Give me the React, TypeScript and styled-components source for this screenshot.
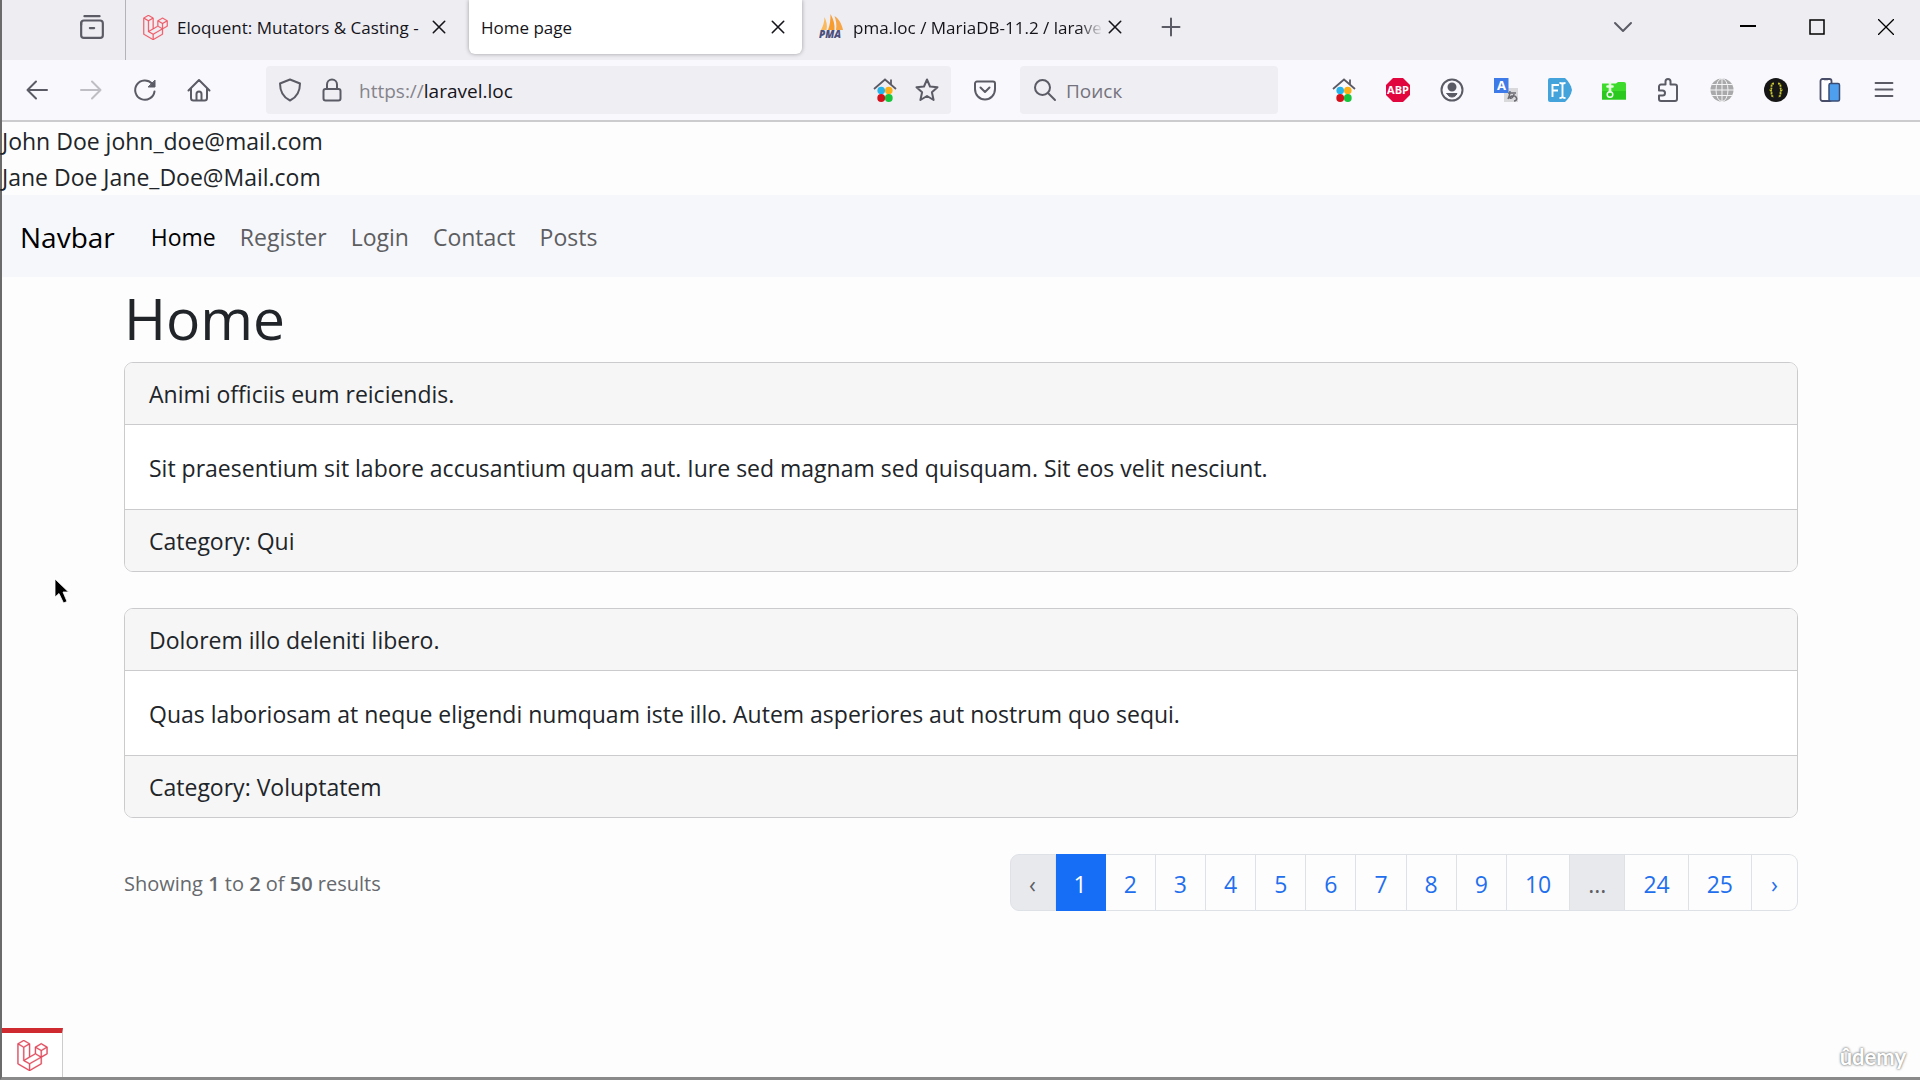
import React from "react";
import styled, { createGlobalStyle } from "styled-components";
import { SiLaravel } from "react-icons/si";

const GlobalStyle = createGlobalStyle`
  *, *::before, *::after { box-sizing: border-box; }
  body {
    margin: 0;
    background: #fdfdfd;
    color: #212529;
    font-family: "Open Sans", "Noto Sans", sans-serif;
    font-size: 23px;
    line-height: 36px;
  }
  button, input { font: inherit; color: inherit; }
  h1, p { margin: 0; }
  a { text-decoration: none; }
`;

const Window = styled.div`
  position: relative;
  display: flex;
  flex-direction: column;
  min-height: 100vh;
  border-left: 2px solid #6b6b6b;
  border-bottom: 3px solid #8a8a8a;
`;

/* ---------- browser chrome ---------- */

const TabStrip = styled.header`
  display: flex;
  align-items: center;
  height: 60px;
  padding-bottom: 6px;
  background: #eeedf2;
  color: #15141a;
  font-size: 17px;
  line-height: 24px;
`;

const RecentArea = styled.div`
  display: flex;
  align-items: center;
  align-self: flex-start;
  flex: none;
  justify-content: flex-end;
  width: 124px;
  height: 60px;
  padding: 0 13px 6px 0;
  border-right: 1px solid #b4b3b8;
`;

const Tab = styled.div<{ $active?: boolean }>`
  display: flex;
  align-items: center;
  width: ${(p) => (p.$active ? 333 : 337)}px;
  height: 54px;
  margin-left: ${(p) => (p.$active ? 6 : 0)}px;
  padding: 0 12px 0 ${(p) => (p.$active ? 12 : 17)}px;
  border-radius: 0 0 6px 6px;
  background: ${(p) => (p.$active ? "#ffffff" : "transparent")};
  box-shadow: ${(p) => (p.$active ? "0 0 4px rgba(0, 0, 0, 0.35)" : "none")};
`;

const Favicon = styled.span`
  display: flex;
  flex: none;
  width: 25px;
  margin-right: 9px;
  color: #f0505c;
`;

const TabTitle = styled.span<{ $fade?: boolean }>`
  flex: 1;
  min-width: 0;
  white-space: nowrap;
  padding-top: 2px;
  ${(p) => p.$fade && "mask-image: linear-gradient(to left, transparent 0, #000 24px);"}
`;

const IconButton = styled.button<{ $width?: number; $tone?: string }>`
  display: flex;
  flex: none;
  align-items: center;
  justify-content: center;
  width: ${(p) => p.$width ?? 54}px;
  height: 48px;
  padding: 0;
  border: 0;
  background: none;
  color: ${(p) => p.$tone ?? "#5b5b66"};
`;

const StripControls = styled.div`
  display: flex;
  gap: 63px;
  margin-left: auto;
`;

const WindowButtons = styled.div`
  display: flex;
`;

const Toolbar = styled.div`
  display: flex;
  align-items: center;
  height: 62px;
  padding: 0 9px 0 8px;
  background: #f9f8fc;
  border-bottom: 2px solid #cccccf;
  font-size: 19px;
`;

const Field = styled.div<{ $width?: number }>`
  display: flex;
  align-items: center;
  flex: ${(p) => (p.$width ? "none" : "1")};
  width: ${(p) => (p.$width ? p.$width + "px" : "auto")};
  height: 48px;
  border-radius: 4px;
  background: #efeef3;
`;

const UrlField = styled(Field)`
  margin: 0 7px 0 40px;
  padding-left: 3px;
`;

const SearchField = styled(Field)`
  margin: 0 39px 0 8px;
  padding-left: 4px;
`;

const Scheme = styled.label`
  padding-top: 2px;
  margin-left: 6px;
  color: #85848c;
`;

const TextInput = styled.input`
  flex: 1;
  min-width: 0;
  padding: 2px 0 0;
  border: 0;
  outline: 0;
  background: none;
  color: #15141a;
  &::placeholder { color: #74737d; opacity: 1; }
`;

/* ---------- web page ---------- */

const Dump = styled.div`
  padding-top: 1px;
`;

const Nav = styled.nav`
  display: flex;
  align-items: center;
  height: 82px;
  padding: 2px 18px 0;
  background: #f6f7fb;
`;

const Brand = styled.a`
  margin-right: 24px;
  color: #000000;
  font-size: 28px;
`;

const NavLink = styled.a<{ $active?: boolean }>`
  padding: 12px;
  color: ${(p) => (p.$active ? "#000000" : "#5d5e61")};
`;

const Container = styled.main`
  width: 100%;
  max-width: 1710px;
  margin: 0 auto;
  padding: 0 18px;
`;

const Title = styled.h1`
  padding: 5px 0 8px;
  font-size: 57px;
  font-weight: 400;
  line-height: 72px;
`;

const Card = styled.article`
  margin-bottom: 36px;
  overflow: hidden;
  border: 1px solid #cbcbcd;
  border-radius: 9px;
  background: #ffffff;
`;

const CardBar = styled.div<{ $foot?: boolean }>`
  padding: 13px 24px 12px;
  background: #f6f6f6;
  border: 0 solid #cbcbcd;
  border-width: ${(p) => (p.$foot ? "1px 0 0" : "0 0 1px")};
`;

const CardBody = styled.p`
  padding: 25px 24px 23px;
`;

const PagerRow = styled.div`
  display: flex;
  align-items: center;
  justify-content: space-between;
`;

const Results = styled.p`
  padding-top: 2px;
  color: #66696d;
  font-size: 20px;
  b { font-weight: 600; }
`;

const Pager = styled.ul`
  display: flex;
  margin: 0;
  padding: 0;
  list-style: none;
`;

const PageLink = styled.a<{ $kind?: "active" | "disabled" }>`
  display: block;
  min-width: 46px;
  padding: 11px 18px 8px;
  border: 1px solid #dee2e6;
  border-left-width: 0;
  color: #1f6fee;
  text-align: center;
  li:first-child > & { border-left-width: 1px; border-radius: 9px 0 0 9px; }
  li:last-child > & { border-radius: 0 9px 9px 0; }
  ${(p) => p.$kind === "active" && "background: #176ef6; border-color: #176ef6; color: #fff;"}
  ${(p) => p.$kind === "disabled" && "background: #e8e9ed; color: #5c5f64;"}
`;

const DebugBar = styled.button`
  display: flex;
  align-items: center;
  justify-content: center;
  width: 61px;
  height: 49px;
  margin-top: auto;
  padding: 0;
  border: 0 solid #cccccc;
  border-top: 5px solid #cf2a30;
  border-right-width: 1px;
  background: #ffffff;
  color: #e0485a;
`;

const Watermark = styled.div`
  position: absolute;
  right: 14px;
  bottom: 5px;
  color: #ffffff;
  font-family: Lato, sans-serif;
  font-size: 22px;
  font-weight: 700;
  line-height: 30px;
  text-shadow: 0 0 2px #777777, 0 0 3px #999999;
`;

const Pointer = styled.svg`
  position: absolute;
  left: 52px;
  top: 578px;
`;

/* ---------- icons ---------- */

const Line = ({ size = 24, w = 2, children }: { size?: number; w?: number; children: React.ReactNode }) => (
  <svg width={size} height={size} viewBox="0 0 24 24" fill="none" stroke="currentColor" strokeWidth={w} strokeLinecap="round" strokeLinejoin="round" aria-hidden="true">
    {children}
  </svg>
);

const Cross = () => (
  <Line w={1.6}><path d="M6.300 6.300l11.400 11.400M17.700 6.300L6.300 17.700" /></Line>
);

const LaravelOutline = ({ size }: { size: number }) => (
  <SiLaravel size={size} stroke="currentColor" strokeWidth={0.3} aria-hidden="true" />
);

const PmaLogo = () => (
  <svg width="25" height="32" viewBox="0 -4 25 32" aria-hidden="true">
    <path d="M2 15C4 11 5.500 7 5.500 2c2 4 3 9 2 13z" fill="#f9b95c" />
    <path d="M9 15c2-5 2.500-10 2.500-16 3 5 4.500 11 4 16z" fill="#f89c2e" />
    <path d="M17 15c1-5 0-10-1.500-14 5 3 7.500 9 8.500 14z" fill="#f6a646" />
    <text x="0" y="23" fontSize="10" fontWeight="800" fontStyle="italic" fill="#4b4f7c" fontFamily="Open Sans, sans-serif">PMA</text>
  </svg>
);

const ColourHouse = () => (
  <svg width="24" height="24" viewBox="0 0 24 24" aria-hidden="true">
    <path d="M1 11L12 1.500 23 11M18 1.500v5" fill="none" stroke="#5b5b66" strokeWidth="1.800" />
    <circle cx="8.200" cy="12.500" r="3.800" fill="#27b4ea" />
    <circle cx="15.800" cy="12.500" r="3.800" fill="#fbb016" />
    <circle cx="8.200" cy="20" r="3.900" fill="#d4101c" />
    <circle cx="15.800" cy="20" r="3.900" fill="#17c43c" />
  </svg>
);

const AdBlock = () => (
  <svg width="24" height="24" viewBox="0 0 24 24" aria-hidden="true">
    <path d="M7 0h10l7 7v10l-7 7H7l-7-7V7z" fill="#e2063f" />
    <text x="12" y="16" textAnchor="middle" fontSize="11" fontWeight="700" fill="#fff" fontFamily="Open Sans, sans-serif">ABP</text>
  </svg>
);

const Translate = () => (
  <svg width="24" height="24" viewBox="0 0 24 24" aria-hidden="true">
    <path d="M10 10h14v14H10z" fill="#d9d9dc" />
    <path d="M14 15h8M16 13c0 4-1 6-2 8M20 16c0 3-3 5-4 4s4-4 6-1-1 4-2 4" fill="none" stroke="#6a6a70" strokeWidth="1.500" />
    <path d="M0 0h14.500v15H0z" fill="#3f7be8" />
    <text x="7.500" y="12" textAnchor="middle" fontSize="13" fontWeight="700" fill="#fff" fontFamily="Open Sans, sans-serif">A</text>
  </svg>
);

const FormInput = () => (
  <svg width="24" height="24" viewBox="0 0 24 24" aria-hidden="true">
    <path d="M2 0h15c4 4 6 7 7 12-1 5-3 8-7 12H2a2 2 0 01-2-2V2a2 2 0 012-2z" fill="#45a3dc" />
    <path d="M4.500 19V7h6.500M4.500 12.500h5.500M11.500 5c2 0 3 .5 3 1.500v12c0 1-1 1.500-3 1.500M17.500 5c-2 0-3 .5-3 1.500M17.500 20c-2 0-3-.5-3-1.500" fill="none" stroke="#fff" strokeWidth="1.900" />
  </svg>
);

const GreenFolder = () => (
  <svg width="24" height="24" viewBox="0 0 24 24" aria-hidden="true">
    <path d="M0 5.500h14l2-1.500h6a2 2 0 012 2v15.500H0z" fill="#3fdb2c" />
    <path d="M0 13h24v8.500H0z" fill="#2bc820" />
    <path d="M8 4.500v9M5.500 8.500h5" stroke="#e9ffe4" strokeWidth="2.600" strokeLinecap="round" />
    <circle cx="8" cy="16.500" r="2.800" fill="none" stroke="#eaffea" strokeWidth="1.500" />
  </svg>
);

const Globe = () => (
  <svg width="24" height="24" viewBox="0 0 24 24" fill="none" stroke="#f4f4f6" aria-hidden="true">
    <circle cx="12" cy="12" r="11.500" fill="#a9a9ab" stroke="none" />
    <path d="M0 12h24M2 6.500h20M2 17.500h20M12 0v24" />
    <ellipse cx="12" cy="12" rx="6" ry="11.500" />
  </svg>
);

const Braces = () => (
  <svg width="24" height="24" viewBox="0 0 24 24" aria-hidden="true">
    <circle cx="12" cy="12" r="12" fill="#161616" />
    <path d="M10 5.500c-2 0-2.500 1-2.500 3s0 2.500-1 3.500c1 1 1 1.500 1 3.500s.5 3 2.500 3M14 5.500c2 0 2.500 1 2.500 3s0 2.500 1 3.500c-1 1-1 1.500-1 3.500s-.5 3-2.500 3" fill="none" stroke="#c9c832" strokeWidth="1.800" strokeDasharray="2 .7" />
  </svg>
);

const Devices = () => (
  <svg width="24" height="24" viewBox="0 0 24 24" aria-hidden="true">
    <rect x="2.500" y="1" width="11" height="22" rx="2" fill="#fff" stroke="#4a4d68" strokeWidth="1.800" />
    <path d="M6 1h4" stroke="#4a4d68" strokeWidth="2.500" />
    <rect x="11" y="5.500" width="10.500" height="17.500" rx="1.500" fill="#4ea0ef" stroke="#3a4c74" strokeWidth="1.500" />
  </svg>
);

/* ---------- content ---------- */

const posts = [
  {
    title: "Animi officiis eum reiciendis.",
    text: "Sit praesentium sit labore accusantium quam aut. Iure sed magnam sed quisquam. Sit eos velit nesciunt.",
    category: "Qui",
  },
  {
    title: "Dolorem illo deleniti libero.",
    text: "Quas laboriosam at neque eligendi numquam iste illo. Autem asperiores aut nostrum quo sequi.",
    category: "Voluptatem",
  },
];

const pages = ["‹", "1", "2", "3", "4", "5", "6", "7", "8", "9", "10", "...", "24", "25", "›"];

const pageKind = (label: string) =>
  label === "1" ? "active" : label === "‹" || label === "..." ? "disabled" : undefined;

const extensions: [string, React.ReactNode][] = [
  ["Start page", <ColourHouse />],
  ["Adblock Plus", <AdBlock />],
  ["Account", <Line><circle cx="12" cy="12" r="10.500" /><circle cx="12" cy="9" r="3.500" fill="currentColor" /><path d="M7 15.500h10c-1 2.500-3 3.500-5 3.500s-4-1-5-3.500z" fill="currentColor" strokeWidth="1" /></Line>],
  ["Translate", <Translate />],
  ["Form filler", <FormInput />],
  ["Downloads", <GreenFolder />],
  ["Extensions", <Line><path d="M3 9.500V8.500a2 2 0 012-2h4.500V3.500a2.500 2.500 0 015 0v3H19a2 2 0 012 2V21a2 2 0 01-2 2H5a2 2 0 01-2-2v-3.500h3.500a2.500 2.500 0 000-5H3z" /></Line>],
  ["Proxy", <Globe />],
  ["JSON viewer", <Braces />],
  ["Responsive view", <Devices />],
  ["Menu", <Line w={1.8}><path d="M3.500 5h17M3.500 11.500h17M3.500 18h17" /></Line>],
];

export default function App() {
  return (
    <Window>
      <GlobalStyle />
      <TabStrip>
        <RecentArea>
          <IconButton $width={40} aria-label="Recent browsing">
            <Line size={26}>
              <path d="M5 2h14" />
              <rect x="2" y="6" width="20" height="16" rx="2.500" />
              <path d="M2 10V8M10 13h4" />
            </Line>
          </IconButton>
        </RecentArea>
        <Tab>
          <Favicon><LaravelOutline size={25} /></Favicon>
          <TabTitle>Eloquent: Mutators &amp; Casting -</TabTitle>
          <IconButton $width={24} $tone="#15141a" aria-label="Close tab"><Cross /></IconButton>
        </Tab>
        <Tab $active>
          <TabTitle>Home page</TabTitle>
          <IconButton $width={24} $tone="#15141a" aria-label="Close tab"><Cross /></IconButton>
        </Tab>
        <Tab>
          <Favicon><PmaLogo /></Favicon>
          <TabTitle $fade>pma.loc / MariaDB-11.2 / larave</TabTitle>
          <IconButton $width={24} $tone="#15141a" aria-label="Close tab"><Cross /></IconButton>
        </Tab>
        <IconButton $width={64} aria-label="New tab">
          <Line><path d="M12 3.500v17M3.500 12h17" /></Line>
        </IconButton>
        <StripControls>
          <IconButton aria-label="List all tabs"><Line><path d="M4 8l8 8 8-8" /></Line></IconButton>
          <WindowButtons>
            <IconButton $width={69} aria-label="Minimize" $tone="#000">
              <svg width="16" height="16" aria-hidden="true"><path d="M0 7h16" stroke="currentColor" strokeWidth="2" /></svg>
            </IconButton>
            <IconButton $width={69} aria-label="Maximize" $tone="#000">
              <svg width="16" height="16" aria-hidden="true"><rect x="1" y="1" width="14" height="14" fill="none" stroke="currentColor" strokeWidth="1.500" /></svg>
            </IconButton>
            <IconButton $width={69} aria-label="Close" $tone="#000">
              <svg width="16" height="16" aria-hidden="true"><path d="M0 0l16 16M16 0L0 16" stroke="currentColor" strokeWidth="1.300" /></svg>
            </IconButton>
          </WindowButtons>
        </StripControls>
      </TabStrip>

      <Toolbar>
        <IconButton aria-label="Back"><Line><path d="M22 12H2.500M11 3.500L2.500 12l8.500 8.500" /></Line></IconButton>
        <IconButton aria-label="Forward" $tone="#bfbec5"><Line><path d="M2 12h19.500M13 3.500l8.500 8.500-8.500 8.500" /></Line></IconButton>
        <IconButton aria-label="Reload"><Line><path d="M21.500 13.500A9.700 9.700 0 1119 5.500" /><path d="M22 2.500v6.500h-6.500z" fill="currentColor" strokeWidth="1" /></Line></IconButton>
        <IconButton aria-label="Home"><Line><path d="M1.500 12.500L12 2l10.500 10.500M4 10.500V20a2.500 2.500 0 002.500 2.500h11A2.500 2.500 0 0020 20v-9.500M9.500 22v-6a2.500 2.500 0 015 0v6" /></Line></IconButton>
        <UrlField>
          <IconButton $width={42} aria-label="Tracking protection"><Line><path d="M12 1.500L22 5.500c0 8-2.500 13.500-10 17C4.500 19 2 13.500 2 5.500z" /></Line></IconButton>
          <IconButton $width={42} aria-label="Connection"><Line><rect x="3.500" y="11" width="17" height="11.500" rx="2" /><path d="M7 11V6.500a5 5 0 0110 0V11" /></Line></IconButton>
          <Scheme htmlFor="url">https://</Scheme>
          <TextInput id="url" defaultValue="laravel.loc" />
          <IconButton $width={36} aria-label="Start page"><ColourHouse /></IconButton>
          <IconButton $width={48} aria-label="Bookmark"><Line><path d="M12 1.500l3 7 7.500.7-5.600 5.100 1.700 7.700-6.600-4-6.600 4 1.700-7.700L1.500 9.200 9 8.500z" /></Line></IconButton>
        </UrlField>
        <IconButton aria-label="Save to Pocket"><Line><path d="M4 3.500h16a2 2 0 012 2V11c0 6-4.500 10.500-10 10.500S2 17 2 11V5.500a2 2 0 012-2zM7.500 9.500l4.500 4.500 4.500-4.500" /></Line></IconButton>
        <SearchField $width={258}>
          <IconButton $width={42} aria-label="Search"><Line><circle cx="9.500" cy="9.500" r="7.500" /><path d="M15 15l7 7" /></Line></IconButton>
          <TextInput aria-label="Поиск" placeholder="Поиск" />
        </SearchField>
        {extensions.map(([name, icon]) => (
          <IconButton key={name} aria-label={name}>{icon}</IconButton>
        ))}
      </Toolbar>

      <Dump>
        <div>John Doe john_doe@mail.com</div>
        <div>Jane Doe Jane_Doe@Mail.com</div>
      </Dump>

      <Nav>
        <Brand href="#">Navbar</Brand>
        <NavLink href="#" $active>Home</NavLink>
        <NavLink href="#">Register</NavLink>
        <NavLink href="#">Login</NavLink>
        <NavLink href="#">Contact</NavLink>
        <NavLink href="#">Posts</NavLink>
      </Nav>

      <Container>
        <Title>Home</Title>
        {posts.map((post) => (
          <Card key={post.title}>
            <CardBar>{post.title}</CardBar>
            <CardBody>{post.text}</CardBody>
            <CardBar $foot>Category: {post.category}</CardBar>
          </Card>
        ))}
        <PagerRow>
          <Results>Showing <b>1</b> to <b>2</b> of <b>50</b> results</Results>
          <Pager>
            {pages.map((label) => (
              <li key={label}>
                <PageLink href="#" $kind={pageKind(label)}>{label}</PageLink>
              </li>
            ))}
          </Pager>
        </PagerRow>
      </Container>

      <DebugBar aria-label="Debug bar"><LaravelOutline size={31} /></DebugBar>
      <Watermark>ûdemy</Watermark>
      <Pointer width="16" height="27" viewBox="0 0 16 27" aria-hidden="true">
        <path d="M1 1v18l4-3.500L9.500 25l3.500-1.500L9 14h5.500z" fill="#000" stroke="#fff" strokeWidth=".8" />
      </Pointer>
    </Window>
  );
}
